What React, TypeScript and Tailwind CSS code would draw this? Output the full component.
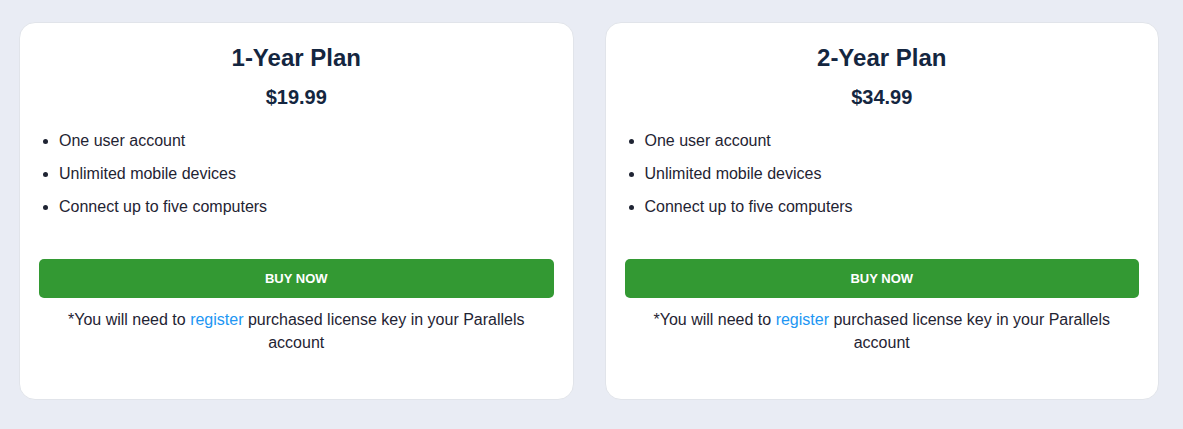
import React from 'react';

type Plan = { name: string; price: string };

const plans: Plan[] = [
  { name: '1-Year Plan', price: '$19.99' },
  { name: '2-Year Plan', price: '$34.99' },
];

const features = ['One user account', 'Unlimited mobile devices', 'Connect up to five computers'];

function PlanCard({ plan }: { plan: Plan }) {
  return (
    <div className="flex flex-col rounded-2xl border border-[#e1e4ea] bg-white px-[19px] pt-[20px] pb-[45px]">
      <h2 className="text-center text-[24px] font-bold leading-[30px] text-[#142640]">{plan.name}</h2>
      <p className="mt-[10px] text-center text-[20px] font-bold leading-[28px] text-[#142640]">{plan.price}</p>
      <ul className="mt-[18px] list-disc space-y-[9px] pl-[20px] text-[16px] leading-[24px] text-[#1f2433]">
        {features.map(f => (
          <li key={f}>{f}</li>
        ))}
      </ul>
      <button
        type="button"
        className="mt-[40px] h-[39px] w-full rounded-[5px] bg-[#339933] text-[13px] font-bold uppercase text-white"
      >
        Buy Now
      </button>
      <p className="mt-[10px] px-[10px] text-center text-[16px] leading-[23px] text-[#1f2433]">
        *You will need to <a className="text-[#2196f3]">register</a> purchased license key in your Parallels account
      </p>
    </div>
  );
}

export default function App() {
  return (
    <div className="min-h-[429px] bg-[#e9ecf4] pl-[19px] pr-[24px] pt-[22px] font-['Liberation_Sans',Arial,sans-serif]">
      <div className="grid grid-cols-2 gap-[31px]">
        {plans.map(p => (
          <PlanCard key={p.name} plan={p} />
        ))}
      </div>
    </div>
  );
}
